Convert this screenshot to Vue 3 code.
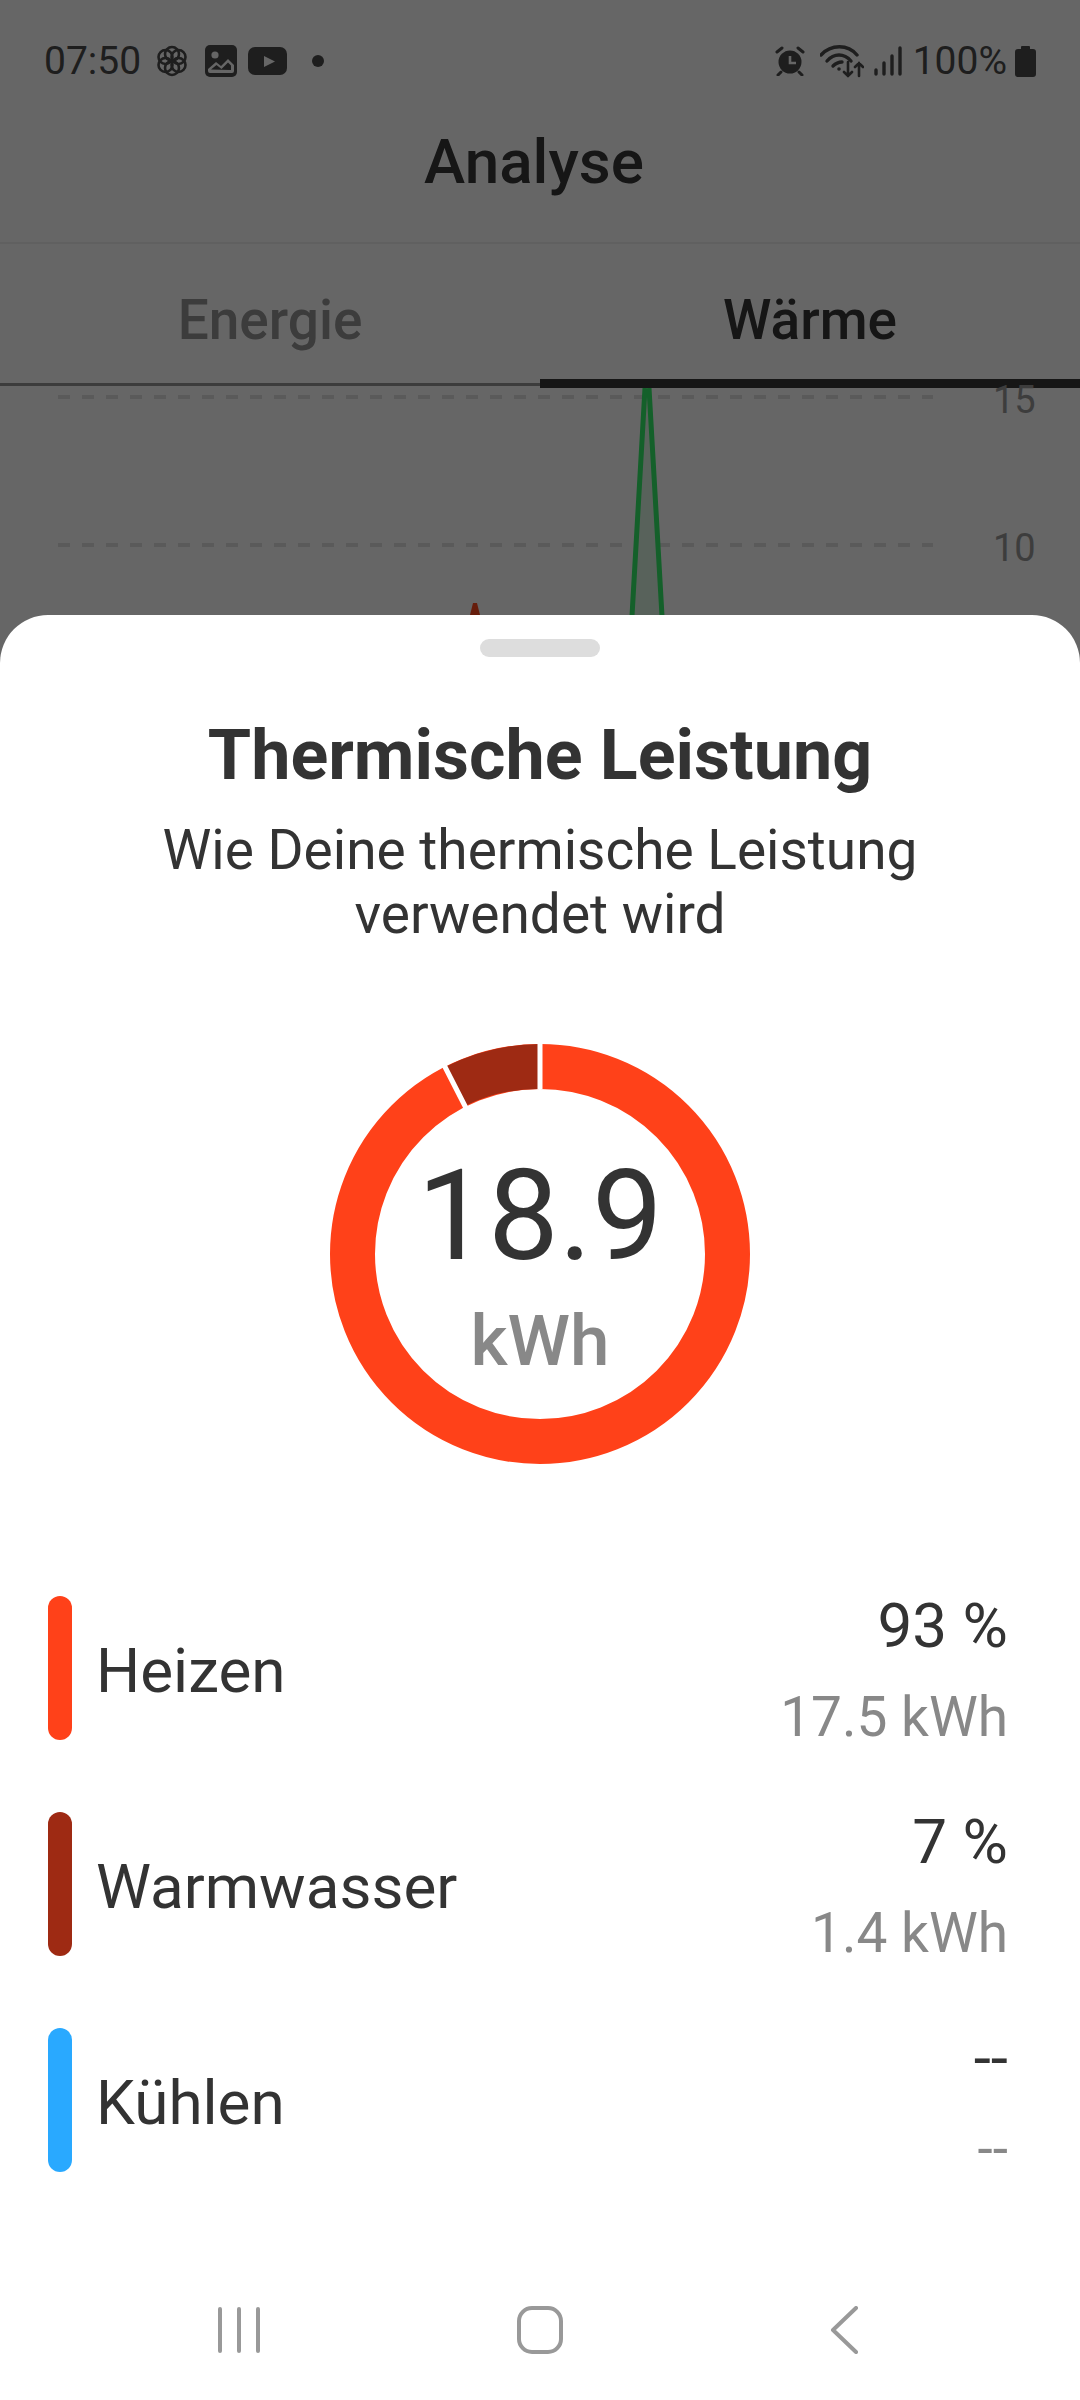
<script setup>
const rows = [
  { name: 'Heizen', color: '#ff4119', pct: '93 %', kwh: '17.5 kWh' },
  { name: 'Warmwasser', color: '#9e2a13', pct: '7 %', kwh: '1.4 kWh' },
  { name: 'Kühlen', color: '#29a9ff', pct: '--', kwh: '--' },
]
</script>

<template>
  <div class="screen">
    <div class="status">
      <span class="time">07:50</span>
      <svg class="ic flower" width="30" height="32" viewBox="0 0 30 32" fill="none" stroke="#4b4b4b" stroke-width="2.6">
        <circle cx="15" cy="9" r="7" />
        <circle cx="15" cy="23" r="7" />
        <circle cx="8.500" cy="12" r="7" />
        <circle cx="21.500" cy="12" r="7" />
        <circle cx="8.500" cy="20" r="7" />
        <circle cx="21.500" cy="20" r="7" />
      </svg>
      <svg class="ic pic" width="32" height="32" viewBox="0 0 32 32">
        <rect width="32" height="32" rx="5" fill="#4b4b4b" />
        <circle cx="10" cy="10" r="3.600" fill="#fff" />
        <path d="M3 24l8-7 5 4 7-7 6 6v6a2 2 0 0 1-2 2H5a2 2 0 0 1-2-2z" fill="#fff" />
        <path d="M6 24.500l5.500-4.500 5 4 6.500-6.500 3 3v4.500z" fill="#4b4b4b" />
      </svg>
      <svg class="ic yt" width="39" height="28" viewBox="0 0 39 28">
        <rect width="39" height="28" rx="7" fill="#4b4b4b" />
        <path d="M16 9l11 5.500-11 5.500z" fill="#fff" />
      </svg>
      <span class="dot"></span>
      <span class="grow"></span>
      <svg class="alarm" width="30" height="30" viewBox="0 0 30 30">
        <circle cx="15" cy="16" r="11.500" fill="#4b4b4b" />
        <path d="M2 6l5-4M28 6l-5-4M6 26l-3 3M24 26l3 3" stroke="#4b4b4b" stroke-width="3" stroke-linecap="round" />
        <path d="M15 10v7h6" fill="none" stroke="#fff" stroke-width="2.600" />
      </svg>
      <svg class="wifi" width="44" height="34" viewBox="0 0 44 34" fill="none" stroke="#4b4b4b" stroke-width="3.400" stroke-linecap="round">
        <path d="M1 11C11 0 28 0 37 11" />
        <path d="M7 17C14 9 24 9 31 17" />
        <path d="M13 22C16 19 19 18 22 18" />
        <circle cx="19" cy="25" r="1.800" fill="#4b4b4b" stroke="none" />
        <path d="M28 18v14M24 28l4 4 4-4M39 32V19M35 23l4-4 4 4" stroke-width="2.600" />
      </svg>
      <svg class="signal" width="28" height="30" viewBox="0 0 28 30" stroke="#4b4b4b" stroke-width="3.400" stroke-linecap="round">
        <path d="M2 24v4M10 17v11M18 10v18M26 2v26" />
      </svg>
      <span class="pct">100%</span>
      <svg class="batt" width="21" height="32" viewBox="0 0 21 32">
        <path d="M6 2a1 1 0 0 1 1-1h7a1 1 0 0 1 1 1v2h3a3 3 0 0 1 3 3v22a3 3 0 0 1-3 3H3a3 3 0 0 1-3-3V7a3 3 0 0 1 3-3h3z" fill="#4b4b4b" />
      </svg>
    </div>

    <header class="top">Analyse</header>

    <div class="tabs">
      <div class="tab">Energie</div>
      <div class="tab on">Wärme</div>
    </div>

    <div class="chart">
      <div class="grid-row">
        <span class="dash"></span>
        <span class="axis">15</span>
      </div>
      <div class="grid-row">
        <span class="dash"></span>
        <span class="axis">10</span>
      </div>
      <svg class="lines" width="1080" height="240" viewBox="0 0 1080 240">
        <path d="M630 228L645 0h4L664 228z" fill="#dcf5e3" />
        <path d="M632 228L645 0M649 0L662 228" fill="none" stroke="#32f06a" stroke-width="5" />
        <path d="M473 215h4l4 16h-12z" fill="#ff4a20" />
      </svg>
    </div>

    <div class="scrim"></div>

    <section class="sheet">
      <div class="handle"></div>
      <h2>Thermische Leistung</h2>
      <p class="sub">Wie Deine thermische Leistung<br />verwendet wird</p>

      <div class="ring">
        <svg width="420" height="420" viewBox="0 0 420 420">
          <circle cx="210" cy="210" r="187.500" fill="none" stroke="#ff4119" stroke-width="45" />
          <path d="M210 0A210 210 0 0 0 115 23L135 62A165 165 0 0 1 210 45z" fill="#9e2a13" />
          <path d="M210 0V45M113 19L137 66" stroke="#fff" stroke-width="5" />
        </svg>
        <div class="ring-txt">
          <div class="big">18.9</div>
          <div class="unit">kWh</div>
        </div>
      </div>

      <ul class="legend">
        <li v-for="r in rows" :key="r.name">
          <span class="bar" :style="{ background: r.color }"></span>
          <span class="name">{{ r.name }}</span>
          <div class="vals">
            <div class="v1">{{ r.pct }}</div>
            <div class="v2">{{ r.kwh }}</div>
          </div>
        </li>
      </ul>

      <nav class="nav">
        <svg width="44" height="48" viewBox="0 0 44 48" stroke="#999" stroke-width="4" stroke-linecap="round">
          <path d="M3 3v42M22 3v42M41 3v42" />
        </svg>
        <svg width="46" height="48" viewBox="0 0 46 48" fill="none" stroke="#999" stroke-width="4">
          <rect x="2" y="2" width="42" height="44" rx="13" />
        </svg>
        <svg width="30" height="48" viewBox="0 0 30 48" fill="none" stroke="#999" stroke-width="4" stroke-linecap="round" stroke-linejoin="round">
          <path d="M26 2L3 24l23 22" />
        </svg>
      </nav>
    </section>
  </div>
</template>

<style scoped>
.screen{position:relative;width:1080px;height:2400px;overflow:hidden;background:#fff;font-family:Roboto,"Liberation Sans",sans-serif;color:#333}
.status{height:122px;margin-bottom:-2px;padding:0 44px 0 44px;box-sizing:border-box;display:flex;align-items:center;color:#4b4b4b;font-size:39px}
.time{margin-right:16px}
.ic{margin-right:15px;flex:none}
.flower{margin-right:18px}
.yt{margin-left:-4px;margin-right:25px}
.dot{width:12px;height:12px;border-radius:50%;background:#4b4b4b}
.grow{flex:1}
.alarm{margin-right:15px}
.wifi{margin-right:10px}
.signal{margin-right:11px}
.pct{margin-right:8px}
.top{height:124px;line-height:84px;padding-right:12px;text-align:center;font-size:62px;font-weight:500;color:#373737;border-bottom:2px solid #f0f0f0;box-sizing:border-box}
.tabs{display:flex;align-items:flex-start;height:144px;box-sizing:border-box;position:relative}
.tab{flex:1;height:142px;box-sizing:border-box;border-bottom:3px solid #969696;text-align:center;font-size:55px;font-weight:500;line-height:152px;color:#969696}
.tab.on{color:#373737;height:144px;border-bottom:9px solid #373737}
.chart{position:relative;height:240px;padding-top:6px;box-sizing:border-box}
.grid-row{display:flex;align-items:center;height:148px;padding-left:58px}
.dash{width:875px;height:4px;background:repeating-linear-gradient(90deg,#e0e0e0 0 12px,transparent 12px 24px);margin-top:-142px}
.axis{margin-left:60px;margin-top:-136px;font-size:38px;color:#999}
.lines{position:absolute;left:0;top:0}
.scrim{position:absolute;inset:0;background:rgba(0,0,0,.6)}
.sheet{position:absolute;left:0;right:0;top:615px;bottom:0;background:#fff;border-radius:48px 48px 0 0;display:flex;flex-direction:column;align-items:center}
.handle{width:120px;height:18px;border-radius:9px;background:#ddd;margin-top:24px}
h2{margin:58px 0 0;font-size:70px;line-height:80px;font-weight:700;color:#333}
.sub{margin:23px 0 0;font-size:55px;line-height:64px;text-align:center;color:#333}
.ring{position:relative;width:420px;height:420px;margin-top:98px;flex:none}
.ring svg{display:block}
.ring-txt{position:absolute;inset:0;text-align:center}
.big{font-size:126px;line-height:130px;margin-top:107px;color:#333}
.unit{font-size:71px;line-height:80px;font-weight:500;color:#888;margin-top:20px}
.legend{list-style:none;margin:132px 0 0;padding:0 72px 0 48px;width:100%;box-sizing:border-box;display:flex;flex-direction:column;gap:72px}
.legend li{display:flex;align-items:center;height:144px}
.bar{width:24px;height:144px;border-radius:12px;flex:none}
.name{margin-left:24px;flex:1;font-size:62px;margin-top:4px}
.vals{text-align:right}
.v1{font-size:62px;line-height:64px;color:#333;margin-top:6px}
.v2{font-size:55px;line-height:64px;color:#888;margin-top:27px}
.nav{position:absolute;left:0;right:0;top:1691px;height:48px}
.nav svg{position:absolute;top:0}
.nav svg:nth-child(1){left:217px}
.nav svg:nth-child(2){left:517px}
.nav svg:nth-child(3){left:830px}
</style>
